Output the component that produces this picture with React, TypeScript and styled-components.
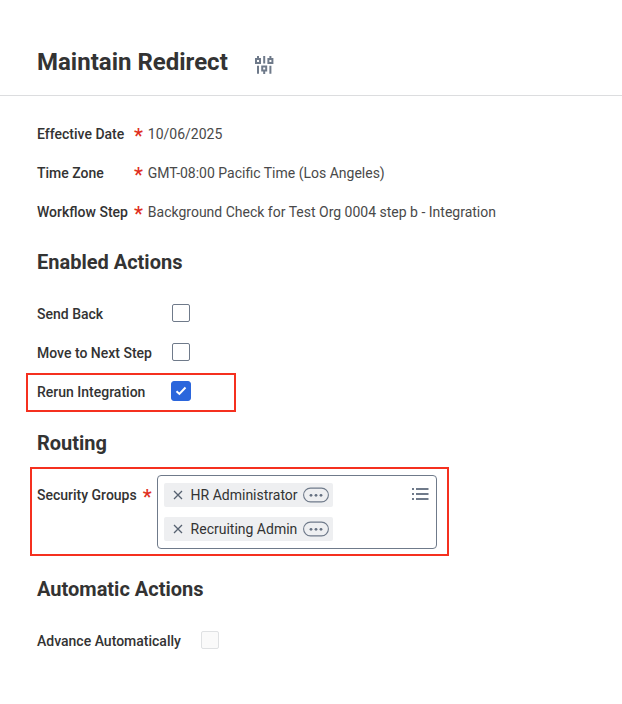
import React, { useState } from "react";
import styled, { createGlobalStyle } from "styled-components";

const ink = "#333333";
const steel = "#6f7a8a";
const alertRed = "#f5301f";

const GlobalStyle = createGlobalStyle`
  *, *::before, *::after { box-sizing: border-box; }
  body {
    margin: 0;
    background: #ffffff;
    color: ${ink};
    font-family: Roboto, "Liberation Sans", sans-serif;
    font-size: 14px;
    line-height: 20px;
  }
`;

const Header = styled.header`
  display: flex;
  align-items: center;
  gap: 27px;
  height: 96px;
  padding: 28px 37px 0;
  border-bottom: 1px solid #dcdddf;
`;

const Title = styled.h1`
  margin: 0;
  font-size: 24px;
  line-height: 32px;
  font-weight: 700;
`;

const IconButton = styled.button`
  display: flex;
  flex: none;
  padding: 0;
  border: 0;
  background: none;
  color: ${steel};
  cursor: pointer;
`;

const SettingsButton = styled(IconButton)`
  margin-top: 6px;
`;

const Main = styled.main`
  padding: 18px 37px 24px;
`;

const Details = styled.dl`
  display: grid;
  grid-template-columns: auto 1fr;
  grid-auto-rows: 39px;
  align-items: center;
  column-gap: 5px;
  justify-content: start;
  margin: 0;
`;

const Term = styled.dt`
  display: flex;
  justify-content: space-between;
  gap: 6px;
  font-weight: 500;
`;

const Value = styled.dd`
  margin: 0;
  color: #494949;
`;

const Asterisk = styled.span`
  color: #e0301e;
  font-size: 20px;
  line-height: 24px;
  height: 20px;
  font-weight: 500;
`;

const SectionTitle = styled.h2`
  margin: 0;
  padding: 19px 0 18px;
  font-size: 20px;
  line-height: 24px;
  font-weight: 700;
`;

const CheckGrid = styled.div`
  display: grid;
  grid-template-columns: max-content max-content;
  column-gap: 19px;
  margin: 2px 0 1px;
`;

const CheckRow = styled.div<{ $marked?: boolean }>`
  position: relative;
  display: grid;
  grid-column: 1 / -1;
  grid-template-columns: subgrid;
  align-items: center;
  height: 39px;

  &::after {
    content: "";
    display: ${(p) => (p.$marked ? "block" : "none")};
    position: absolute;
    inset: 1px -45px -1px -11px;
    border: 2px solid ${alertRed};
    pointer-events: none;
  }
`;

const Label = styled.label`
  font-weight: 500;
`;

const CheckControl = styled.span`
  display: grid;
  place-items: center;
  width: 20px;
  height: 20px;
  margin-bottom: 2px;

  > * {
    grid-area: 1 / 1;
  }

  svg {
    pointer-events: none;
  }
`;

const CheckInput = styled.input`
  appearance: none;
  width: 18px;
  height: 18px;
  margin: 0;
  border: 1px solid ${steel};
  border-radius: 2px;
  background: #ffffff;

  &:checked {
    width: 20px;
    height: 20px;
    border-color: #2b66dc;
    border-radius: 3px;
    background: #2b66dc;
  }

  &:disabled {
    border-color: #dfe1e3;
    background: #fafafa;
  }
`;

const RoutingRow = styled.div`
  position: relative;
  display: flex;
  align-items: flex-start;
  width: fit-content;
  margin: 2px 0 9px;

  &::after {
    content: "";
    position: absolute;
    inset: -8px -12px -7px -7px;
    border: 2px solid ${alertRed};
    pointer-events: none;
  }
`;

const RoutingLabel = styled.div`
  display: flex;
  gap: 6px;
  padding: 10px 5px 0 0;
  font-weight: 500;
`;

const Picker = styled.div`
  display: flex;
  justify-content: space-between;
  align-items: flex-start;
  width: 280px;
  padding: 7px 7px 7px 6px;
  border: 1px solid ${steel};
  border-radius: 4px;
`;

const ChipList = styled.ul`
  display: flex;
  flex-direction: column;
  gap: 10px;
  margin: 0;
  padding: 0;
  list-style: none;
`;

const Chip = styled.li`
  display: flex;
  align-items: center;
  height: 24px;
  padding: 0 4px 0 9px;
  border-radius: 2px;
  background: #eeeff1;
`;

const ChipText = styled.span`
  flex: 1;
  margin: 0 5px 0 8px;
`;

const ListButton = styled(IconButton)`
  margin-top: 4px;
`;

function SlidersIcon() {
  return (
    <svg width="19" height="18" viewBox="0 0 19 18" fill="none" stroke="currentColor" strokeWidth="2">
      <path d="M3 0v3M9.200 0v7.500M15.400 0v3M3 9.800v8M9.200 15v3M15.400 9.800v8" />
      <path d="M1 3h4v4H1zM13.400 3h4v4h-4zM7.200 10.500h4v4h-4z" />
    </svg>
  );
}

function CheckIcon() {
  return (
    <svg width="12" height="10" viewBox="0 0 12 10" fill="none" stroke="#ffffff" strokeWidth="2">
      <path d="M1.500 5.200l2.900 2.700L10.500 1.500" />
    </svg>
  );
}

function CrossIcon() {
  return (
    <svg width="10" height="10" viewBox="0 0 10 10" fill="none" stroke="#566170" strokeWidth="1.300">
      <path d="M1 1l8 8M9 1l-8 8" />
    </svg>
  );
}

function MoreIcon() {
  return (
    <svg width="26" height="16" viewBox="0 0 26 16">
      <rect x="0.600" y="1.100" width="24.800" height="13.800" rx="6.900" fill="none" stroke="currentColor" strokeWidth="1.100" />
      <g fill="#657080">
        <circle cx="8" cy="8.300" r="1.400" />
        <circle cx="13" cy="8.300" r="1.400" />
        <circle cx="18" cy="8.300" r="1.400" />
      </g>
    </svg>
  );
}

function ListIcon() {
  return (
    <svg width="17" height="14" viewBox="0 0 17 14" fill="currentColor">
      <path d="M0 1h2v2H0zM4 1h12.500v2H4zM0 6h2v2H0zM4 6h12.500v2H4zM0 11h2v2H0zM4 11h12.500v2H4z" />
    </svg>
  );
}

interface CheckFieldProps {
  id: string;
  label: string;
  initial?: boolean;
  disabled?: boolean;
  marked?: boolean;
}

function CheckField({ id, label, initial = false, disabled, marked }: CheckFieldProps) {
  const [checked, setChecked] = useState(initial);
  return (
    <CheckRow $marked={marked}>
      <Label htmlFor={id}>{label}</Label>
      <CheckControl>
        <CheckInput
          id={id}
          type="checkbox"
          checked={checked}
          disabled={disabled}
          onChange={(e) => setChecked(e.target.checked)}
        />
        {checked && <CheckIcon />}
      </CheckControl>
    </CheckRow>
  );
}

const details = [
  { term: "Effective Date", value: "10/06/2025" },
  { term: "Time Zone", value: "GMT-08:00 Pacific Time (Los Angeles)" },
  { term: "Workflow Step", value: "Background Check for Test Org 0004 step b - Integration" },
];

export default function App() {
  const [groups, setGroups] = useState(["HR Administrator", "Recruiting Admin"]);

  return (
    <>
      <GlobalStyle />
      <Header>
        <Title>Maintain Redirect</Title>
        <SettingsButton type="button" aria-label="Configure">
          <SlidersIcon />
        </SettingsButton>
      </Header>
      <Main>
        <Details>
          {details.map(({ term, value }) => (
            <React.Fragment key={term}>
              <Term>
                {term}
                <Asterisk>*</Asterisk>
              </Term>
              <Value>{value}</Value>
            </React.Fragment>
          ))}
        </Details>

        <SectionTitle>Enabled Actions</SectionTitle>
        <CheckGrid>
          <CheckField id="send-back" label="Send Back" />
          <CheckField id="next-step" label="Move to Next Step" />
          <CheckField id="rerun" label="Rerun Integration" initial marked />
        </CheckGrid>

        <SectionTitle>Routing</SectionTitle>
        <RoutingRow>
          <RoutingLabel id="groups-label">
            Security Groups
            <Asterisk>*</Asterisk>
          </RoutingLabel>
          <Picker role="group" aria-labelledby="groups-label">
            <ChipList>
              {groups.map((name) => (
                <Chip key={name}>
                  <IconButton
                    type="button"
                    aria-label={`Remove ${name}`}
                    onClick={() => setGroups(groups.filter((g) => g !== name))}
                  >
                    <CrossIcon />
                  </IconButton>
                  <ChipText>{name}</ChipText>
                  <IconButton type="button" aria-label={`Actions for ${name}`}>
                    <MoreIcon />
                  </IconButton>
                </Chip>
              ))}
            </ChipList>
            <ListButton type="button" aria-label="Browse groups">
              <ListIcon />
            </ListButton>
          </Picker>
        </RoutingRow>

        <SectionTitle>Automatic Actions</SectionTitle>
        <CheckGrid>
          <CheckField id="advance" label="Advance Automatically" disabled />
        </CheckGrid>
      </Main>
    </>
  );
}
